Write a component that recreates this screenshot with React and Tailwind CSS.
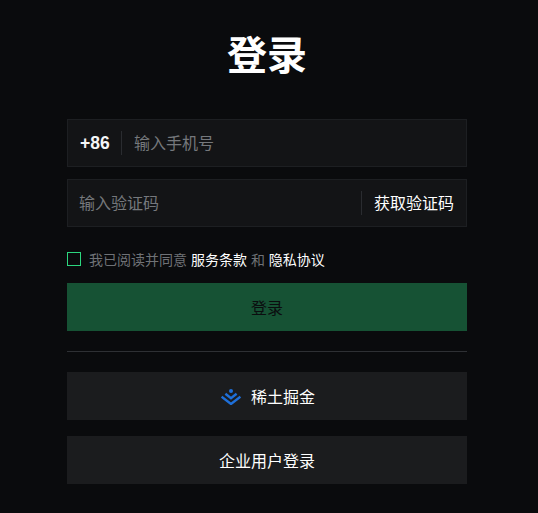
export default function App() {
  return (
    <div className="min-h-[513px] bg-[#0a0b0d] overflow-hidden font-['Inter','Noto_Sans_CJK_SC',sans-serif]">
      <div className="w-[400px] ml-[67px] flex flex-col">
        <h1 className="mt-[28px] h-[56px] leading-[56px] text-center text-[40px] font-bold text-white">登录</h1>
        <div className="mt-[35px] h-[48px] flex items-center border border-[#1d1f22] bg-[#131416] pl-3 pr-3">
          <span className="w-[30px] text-[17.5px] font-bold text-[#f5f6f7] font-['Liberation_Sans']">+86</span>
          <span className="ml-[11px] w-px h-6 bg-[#2a2c30]"></span>
          <span className="ml-3 text-base text-[#75787c]">输入手机号</span>
        </div>
        <div className="mt-3 h-[48px] flex items-center justify-between border border-[#1d1f22] bg-[#131416] pl-[11px] pr-3">
          <span className="text-base text-[#75787c]">输入验证码</span>
          <div className="flex items-center">
            <span className="w-px h-6 bg-[#2a2c30]"></span>
            <span className="ml-3 text-base text-white">获取验证码</span>
          </div>
        </div>
        <div className="mt-[25px] h-[14px] flex items-center">
          <span className="w-[14px] h-[14px] border border-[#2cd77f]"></span>
          <span className="ml-2 pt-px text-sm text-[#6f7276]">
            我已阅读并同意 <span className="text-white">服务条款</span> 和 <span className="text-white">隐私协议</span>
          </span>
        </div>
        <button className="mt-[17px] h-[48px] bg-[#165234] text-base text-[#0b0d0f] pt-px">登录</button>
        <div className="mt-5 h-px bg-[#2e3034]"></div>
        <button className="mt-5 h-[48px] bg-[#1b1c1e] flex items-center justify-center text-base text-white pt-px pl-[2px]">
          <svg width="20" height="16" viewBox="0 0 20 16" fill="none" className="mr-[10px]">
            <circle cx="10" cy="2" r="2" fill="#1e6fd9" />
            <path d="M4.4 4.8 10 9.3 15.6 4.8" stroke="#1e6fd9" strokeWidth="2.4" />
            <path d="M.6 7.8 10 15 19.4 7.8" stroke="#1e6fd9" strokeWidth="2.4" />
          </svg>
          稀土掘金
        </button>
        <button className="mt-4 h-[48px] bg-[#1b1c1e] text-base text-white pt-px">企业用户登录</button>
      </div>
    </div>
  );
}
